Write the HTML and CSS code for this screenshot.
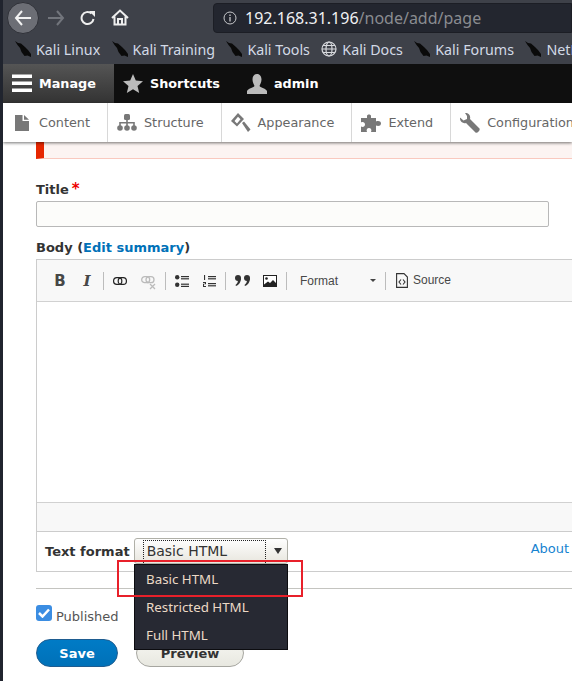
FILE: index.html
```html
<!DOCTYPE html>
<html>
<head>
    <title>Create Basic page</title>
    <link rel="stylesheet" href="styles.css">
</head>
<body>
<svg class="defs">
    <symbol id="kali" viewBox="0 0 16 16">
        <path d="M0 0 L3 2 L6 2.500 L10 6 L13 9 L16 13 L16 16 L12.500 14.500 L9.500 15 L6.500 11 L5 7 L2.500 4 Z" fill="#0a0a0a"/>
    </symbol>
</svg>
<div class="desktop-edge"></div>
<div class="window">
    <div class="nav-bar">
        <div class="nav-btn back">
            <svg width="18" height="16" viewBox="0 0 18 16"><path d="M8 1 L2 8 L8 15 M2 8 H17" fill="none" stroke="#f2f2f2" stroke-width="2"/></svg>
        </div>
        <svg class="forward" width="18" height="16" viewBox="0 0 18 16"><path d="M10 1 L16 8 L10 15 M16 8 H1" fill="none" stroke="#72757c" stroke-width="2"/></svg>
        <svg class="reload" width="16" height="16" viewBox="0 0 16 16"><path d="M13.500 9 A6 6 0 1 1 11.500 3.500" fill="none" stroke="#eee" stroke-width="2"/><path d="M9 1 H15 V7 Z" fill="#eee"/></svg>
        <svg class="home" width="18" height="17" viewBox="0 0 18 17"><path d="M1 9 L9 1.500 L17 9 M3.500 7.500 V15.500 H14.500 V7.500 M7 15.500 V10 H11 V15.500" fill="none" stroke="#eee" stroke-width="2"/></svg>
        <div class="address">
            <svg width="14" height="14" viewBox="0 0 14 14"><circle cx="7" cy="7" r="6" fill="none" stroke="#c8c9cc" stroke-width="1"/><path d="M7 6 V10.500 M7 3.400 V5" stroke="#c8c9cc" stroke-width="1.300"/></svg>
            <span class="host">192.168.31.196</span><span class="path">/node/add/page</span>
        </div>
    </div>
    <div class="bookmarks">
        <span class="bookmark"><svg><use href="#kali"/></svg>Kali Linux</span>
        <span class="bookmark"><svg><use href="#kali"/></svg>Kali Training</span>
        <span class="bookmark"><svg><use href="#kali"/></svg>Kali Tools</span>
        <span class="bookmark"><svg viewBox="0 0 16 16"><g fill="none" stroke="#d8dade" stroke-width="1.200"><circle cx="8" cy="8" r="7"/><ellipse cx="8" cy="8" rx="3" ry="7"/><path d="M1 8 H15 M2 4.500 H14 M2 11.500 H14"/></g></svg>Kali Docs</span>
        <span class="bookmark"><svg><use href="#kali"/></svg>Kali Forums</span>
        <span class="bookmark"><svg><use href="#kali"/></svg>NetHunter</span>
    </div>

    <div class="toolbar">
        <div class="toolbar-item active">
            <svg width="20" height="19" viewBox="0 0 20 19"><path d="M0 0.500 H20 V4 H0 Z M0 7.500 H20 V11 H0 Z M0 14.500 H20 V18 H0 Z" fill="#fff"/></svg>
            Manage
        </div>
        <div class="toolbar-item">
            <svg width="20" height="19" viewBox="0 0 20 19"><path d="M10 0 L12.800 6.500 L20 7.200 L14.500 11.900 L16.200 19 L10 15.200 L3.800 19 L5.500 11.900 L0 7.200 L7.200 6.500 Z" fill="#bbb"/></svg>
            Shortcuts
        </div>
        <div class="toolbar-item">
            <svg width="20" height="20" viewBox="0 0 20 20"><path d="M10 0 C13 0 14.500 2.500 14.500 5.500 C14.500 8.500 13 10.500 12.500 12 C14 14 19 14.500 20 17 V20 H0 V17 C1 14.500 6 14 7.500 12 C7 10.500 5.500 8.500 5.500 5.500 C5.500 2.500 7 0 10 0 Z" fill="#bbb"/></svg>
            admin
        </div>
    </div>
    <div class="tray">
        <div class="tray-item first">
            <svg width="14" height="16" viewBox="0 0 14 16"><path d="M0 0 H7.500 V6 H14 V16 H0 Z M9 0 L14 4.800 H9 Z" fill="#787878"/></svg>
            Content
        </div>
        <div class="tray-item">
            <svg width="20" height="17" viewBox="0 0 20 17"><g fill="#787878"><rect x="7" y="0" width="6" height="6" rx="1.500"/><path d="M9.200 5 H10.800 V8 H17.800 V12 H16.200 V9.500 H10.800 V12 H9.200 V9.500 H3.800 V12 H2.200 V8 H9.200 Z"/><circle cx="3" cy="14" r="2.800"/><circle cx="10" cy="14" r="2.800"/><circle cx="17" cy="14" r="2.800"/></g></svg>
            Structure
        </div>
        <div class="tray-item">
            <svg width="20" height="20" viewBox="0 0 20 20"><path d="M0 8 L7 0 L13 6 L6 13.500 Z M3.500 8 L6 10.500 L9.500 6.200 L7 3.800 Z" fill="#787878"/><path d="M11 10 L13 8.500 L19.500 16.500 L17 19 Z" fill="#787878"/></svg>
            Appearance
        </div>
        <div class="tray-item">
            <svg width="20" height="18" viewBox="0 0 20 18"><path d="M0 4 H6 V2 C6 0 10 0 10 2 V4 H15 V7.500 C17 6.500 20 7 20 9.500 C20 12 17 12.500 15 11.500 V18 H10 C11 16 10 14 8 14 C6 14 5 16 6 18 H0 V12.500 C2 13.500 4 12.500 4 10.500 C4 8.500 2 7.500 0 8.500 Z" fill="#787878"/></svg>
            Extend
        </div>
        <div class="tray-item">
            <svg width="20" height="20" viewBox="0 0 20 20"><path d="M5 0 C8 -0.500 11 2 10 6 L19.500 15.500 C20.500 17 17.500 20.500 15.500 19.500 L6 10 C2.500 11 -0.500 8 0 4.500 L3.500 7.500 L7 6 L7 3 Z" fill="#787878"/></svg>
            Configuration
        </div>
    </div>

    <div class="page">
        <div class="message"></div>

        <label class="field-label title-label">Title<span class="required">*</span></label>
        <input class="text-input" type="text">

        <div class="field-label body-label">Body (<a class="link">Edit summary</a>)</div>
        <div class="editor">
            <div class="editor-tools">
                <span class="tool bold">B</span>
                <span class="tool italic">I</span>
                <span class="sep"></span>
                <svg class="tool-icon" width="14" height="8" viewBox="0 0 14 8"><g fill="none" stroke="#222" stroke-width="1.200"><rect x="0.600" y="0.600" width="8.200" height="6.800" rx="3.200"/><rect x="5.200" y="0.600" width="8.200" height="6.800" rx="3.200"/></g></svg>
                <svg class="tool-icon unlink" width="15" height="14" viewBox="0 0 15 14"><g fill="none" stroke="#bbb" stroke-width="1.300"><rect x="0.700" y="0.700" width="8" height="6" rx="3"/><rect x="5" y="0.700" width="8" height="6" rx="3"/><path d="M9 8 L14 13 M14 8 L9 13"/></g></svg>
                <span class="sep"></span>
                <svg class="tool-icon" width="14" height="12" viewBox="0 0 14 12"><g fill="#333"><circle cx="2.200" cy="2.200" r="2.200"/><circle cx="2.200" cy="9.800" r="2.200"/><rect x="6" y="1" width="8" height="1.200"/><rect x="6" y="3.200" width="8" height="1.200"/><rect x="6" y="8.600" width="8" height="1.200"/><rect x="6" y="10.800" width="8" height="1.200"/></g></svg>
                <svg class="tool-icon list-num" width="13" height="12" viewBox="0 0 13 12"><g fill="#333"><rect x="1" y="0" width="1.100" height="5"/><path d="M0 7 H3 V9.300 H1 V11 H3 V12 H0 V8.700 H2 V8 H0 Z"/><rect x="5" y="1" width="8" height="1.200"/><rect x="5" y="3.200" width="8" height="1.200"/><rect x="5" y="8" width="8" height="1.200"/><rect x="5" y="10.200" width="8" height="1.200"/></g></svg>
                <span class="sep"></span>
                <svg class="tool-icon" width="15" height="11" viewBox="0 0 15 11"><g fill="#333"><circle cx="3" cy="3" r="3"/><path d="M6 3 C6 7 4 10 1 11 L0.500 10 C2 9 3 7 3 5 Z"/><circle cx="12" cy="3" r="3"/><path d="M15 3 C15 7 13 10 10 11 L9.500 10 C11 9 12 7 12 5 Z"/></g></svg>
                <svg class="tool-icon picture" width="14" height="12" viewBox="0 0 14 12"><path d="M0 0 H14 V12 H0 Z" fill="#222"/><path d="M1 1 H13 V8 L10 5 L7 8 L5 6.500 L1 9.500 Z" fill="#fff"/><circle cx="3.500" cy="3.500" r="1.300" fill="#222"/></svg>
                <span class="sep"></span>
                <span class="format-combo">Format<span class="caret"></span></span>
                <span class="sep"></span>
                <svg class="tool-icon source-icon" width="12" height="15" viewBox="0 0 12 15"><path d="M0.600 0.600 H8 L11.400 4 V14.400 H0.600 Z" fill="none" stroke="#333" stroke-width="1.100"/><path d="M5 6.500 L3 9 L5 11.500 M7 6.500 L9 9 L7 11.500" fill="none" stroke="#333" stroke-width="1.100"/></svg>
                <span class="source-label">Source</span>
            </div>
            <div class="editor-area"></div>
            <div class="editor-path"></div>
            <div class="format-row">
                <span class="format-label">Text format</span>
                <div class="select">
                    <span class="select-value">Basic HTML</span>
                    <span class="select-arrow"></span>
                </div>
                <a class="link about">About</a>
            </div>
        </div>

        <hr class="rule">

        <label class="published">
            <span class="checkbox">
                <svg width="12" height="10" viewBox="0 0 12 10"><path d="M1 5 L4.500 8.500 L11 1.500" fill="none" stroke="#fff" stroke-width="2.500"/></svg>
            </span>
            Published
        </label>

        <div class="actions">
            <button class="btn btn-save" type="button">Save</button>
            <button class="btn btn-preview" type="button">Preview</button>
        </div>

        <ul class="dropdown">
            <li>Basic HTML</li>
            <li>Restricted HTML</li>
            <li>Full HTML</li>
        </ul>
        <div class="highlight"></div>
    </div>
</div>
</body>
</html>
```

FILE: styles.css
```css
html, body {
    margin: 0;
    padding: 0;
    height: 681px;
    overflow: hidden;
    background-color: #fff;
}

body {
    display: flex;
    font-family: "DejaVu Sans", sans-serif;
}

.defs {
    display: none;
}

.desktop-edge {
    width: 3px;
    flex: none;
    background-color: #20242e;
}

.window {
    width: 569px;
    flex: none;
    overflow: hidden;
    position: relative;
}

/* browser chrome */
.nav-bar {
    height: 34px;
    display: flex;
    align-items: center;
    background-color: #3e4149;
    padding-top: 1px;
    box-sizing: border-box;
}

.nav-btn.back {
    width: 32px;
    height: 32px;
    margin-left: 4px;
    border-radius: 50%;
    background-color: #6c6e75;
    border: 1px solid #2f3138;
    box-sizing: border-box;
    display: flex;
    align-items: center;
    justify-content: center;
    flex: none;
}

.forward {
    margin-left: 8px;
    flex: none;
}

.reload {
    margin-left: 15px;
    flex: none;
}

.home {
    margin-left: 15px;
    flex: none;
}

.address {
    margin-left: 84px;
    flex: 1;
    height: 30px;
    background-color: #23262f;
    border: 1px solid #1c1e25;
    border-radius: 4px 0 0 4px;
    box-sizing: border-box;
    display: flex;
    align-items: center;
    padding-left: 9px;
    font-family: "Noto Sans", sans-serif;
    font-size: 16px;
    white-space: nowrap;
}

.address svg {
    margin-right: 8px;
    flex: none;
}

.host {
    color: #f0f1f3;
}

.path {
    color: #8a8c91;
}

.bookmarks {
    height: 30px;
    display: flex;
    align-items: center;
    gap: 11.4px;
    padding-left: 12px;
    background-color: #3e4149;
    font-family: "Noto Sans", sans-serif;
    font-size: 14.25px;
    color: #d3dae6;
    white-space: nowrap;
}

.bookmark {
    display: flex;
    align-items: center;
    gap: 5px;
    flex: none;
}

.bookmark svg {
    width: 16px;
    height: 16px;
}

/* drupal toolbar */
.toolbar {
    height: 39px;
    display: flex;
    background-color: #0f0f0f;
    color: #fff;
    font-size: 12.8px;
    font-weight: bold;
}

.toolbar-item {
    display: flex;
    align-items: center;
    gap: 7px;
    padding: 0 18px 0 9px;
    flex: none;
}

.toolbar-item.active {
    width: 111px;
    box-sizing: border-box;
    background: linear-gradient(#555, #333);
}

.tray {
    height: 39px;
    display: flex;
    background-color: #fff;
    box-shadow: 0 1px 3px rgba(0, 0, 0, 0.55);
    color: #666;
    font-size: 12.8px;
    position: relative;
    z-index: 1;
}

.tray-item {
    display: flex;
    align-items: center;
    gap: 7px;
    height: 100%;
    box-sizing: border-box;
    padding: 0 17px 0 9px;
    border-right: 1px solid #d8d8d8;
    flex: none;
    white-space: nowrap;
}

.tray-item.first {
    padding: 0 17px 0 12px;
    gap: 10px;
    width: 105px;
}

/* form */
.page {
    position: relative;
    height: 539px;
    padding-left: 33px;
    background-color: #fff;
    color: #333;
    font-size: 13px;
}

.message {
    width: 600px;
    height: 17px;
    box-sizing: border-box;
    background-color: #fcf4f2;
    border-left: 8px solid #e62600;
    border-bottom: 1px solid #f9c9bf;
}

.field-label {
    display: block;
    font-weight: bold;
    line-height: 16px;
}

.title-label {
    margin-top: 22px;
}

.required {
    color: #e00;
    margin-left: 3px;
    font-size: 15px;
}

.text-input {
    display: block;
    width: 513px;
    height: 26px;
    margin: 3px 0 0;
    box-sizing: border-box;
    background-color: #fcfcfa;
    border: 1px solid #b8b8b8;
    border-radius: 2px;
    padding: 0;
}

.body-label {
    margin-top: 13px;
}

.link {
    color: #0071b8;
}

.editor {
    margin-top: 3px;
    width: 600px;
    height: 313px;
    box-sizing: border-box;
    border: 1px solid #ccc;
    display: flex;
    flex-direction: column;
}

.editor-tools {
    height: 42px;
    flex: none;
    box-sizing: border-box;
    border-bottom: 1px solid #d1d1d1;
    background-color: #f8f8f8;
    display: flex;
    align-items: center;
    padding-left: 17px;
}

.tool {
    width: 12px;
    text-align: center;
    color: #474747;
    font-weight: bold;
    font-size: 15px;
}

.tool.italic {
    margin-left: 15px;
    margin-right: 1px;
    font-family: "DejaVu Serif", serif;
    font-style: italic;
}

.sep {
    width: 1px;
    height: 18px;
    margin: 0 9px;
    background-color: #bcbcbc;
    flex: none;
}

.tool-icon {
    flex: none;
}

.unlink {
    margin-left: 14px;
    margin-top: 4px;
}

.list-num {
    margin-left: 14px;
}

.picture {
    margin-left: 13px;
}

.format-combo {
    width: 80px;
    box-sizing: border-box;
    display: flex;
    align-items: center;
    justify-content: space-between;
    padding-left: 4px;
    font-family: "Liberation Sans", sans-serif;
    font-size: 12px;
    color: #484848;
}

.caret {
    width: 0;
    height: 0;
    border: 3px solid transparent;
    border-top: 3px solid #444;
    border-bottom: 0;
}

.source-icon {
    margin-left: 1px;
}

.source-label {
    margin-left: 5px;
    font-family: "Liberation Sans", sans-serif;
    font-size: 12px;
    color: #484848;
    margin-top: -2px;
}

.editor-area {
    height: 200px;
    flex: none;
    background-color: #fff;
}

.editor-path {
    height: 29px;
    flex: none;
    box-sizing: border-box;
    border-top: 1px solid #d1d1d1;
    background-color: #f8f8f8;
}

.format-row {
    flex: 1;
    position: relative;
    border-top: 1px solid #ccc;
    display: flex;
    align-items: center;
    padding-left: 8px;
}

.format-label {
    font-weight: bold;
    margin-right: 4px;
    white-space: nowrap;
}

.select {
    width: 154px;
    height: 26px;
    flex: none;
    box-sizing: border-box;
    margin-top: -2px;
    display: flex;
    align-items: center;
    justify-content: space-between;
    padding: 0 5px 0 8px;
    border: 1px solid #b0b0a8;
    border-radius: 3px;
    background: linear-gradient(#fefefe, #e8e6de);
    font-size: 14px;
    color: #333;
}

.select-value {
    width: 123px;
    height: 23px;
    line-height: 21px;
    box-sizing: border-box;
    border: 1px dotted #222;
    border-bottom: 0;
    padding-left: 3px;
    align-self: flex-end;
}

.select-arrow {
    width: 0;
    height: 0;
    border-left: 4px solid transparent;
    border-right: 4px solid transparent;
    border-top: 6px solid #333;
}

.about {
    margin-left: 243px;
    margin-top: -6px;
    white-space: nowrap;
    color: #1683d0;
}

.rule {
    margin: 16px 0 0;
    width: 600px;
    height: 1px;
    border: 0;
    background-color: #c4c4c0;
}

.published {
    margin-top: 16px;
    height: 19px;
    display: flex;
    align-items: flex-end;
    gap: 4px;
    color: #555;
}

.checkbox {
    width: 16px;
    height: 16px;
    margin-bottom: 3px;
    border-radius: 3px;
    background-color: #3b8de2;
    display: flex;
    align-items: center;
    justify-content: center;
}

.actions {
    margin-top: 15px;
    display: flex;
    gap: 18px;
}

.btn {
    height: 28px;
    border-radius: 14px;
    font-family: "DejaVu Sans", sans-serif;
    font-size: 13px;
    font-weight: bold;
    padding: 0;
}

.btn-save {
    width: 82px;
    color: #fff;
    border: 1px solid #1e5c90;
    background: linear-gradient(#007bc6, #0071b8);
}

.btn-preview {
    width: 108px;
    color: #333;
    border: 1px solid #a6a6a0;
    background: linear-gradient(#f6f6f2, #e8e8e0);
}

.dropdown {
    position: absolute;
    left: 131px;
    top: 422px;
    width: 154px;
    box-sizing: border-box;
    margin: 0;
    padding: 0;
    list-style: none;
    background-color: #272933;
    border: 1px solid #0c0c10;
    font-family: "Noto Sans", sans-serif;
    font-size: 13.33px;
    color: #ecd9c6;
}

.dropdown li {
    height: 28px;
    line-height: 28px;
    padding-left: 11px;
}

.highlight {
    position: absolute;
    left: 114px;
    top: 418px;
    width: 186px;
    height: 37px;
    box-sizing: border-box;
    border: 2px solid #e8202a;
}
```
